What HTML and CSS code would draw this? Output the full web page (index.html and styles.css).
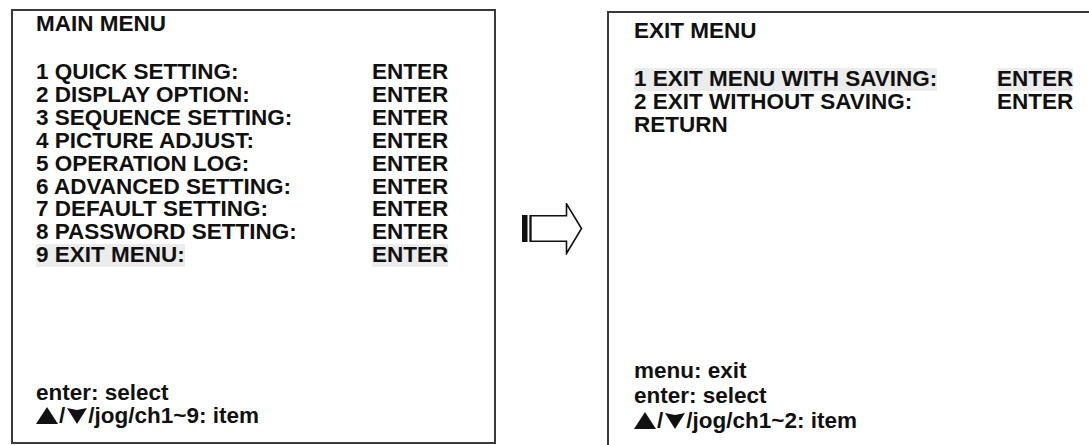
FILE: index.html
```html
<!DOCTYPE html>
<html lang="en">
<head>
  <meta charset="UTF-8" />
  <title>Exit Menu</title>
  <link rel="stylesheet" href="styles.css">
</head>
<body>
  <div class="screens">
    <div class="osd osd-main">
      <div class="osd-title">MAIN MENU</div>
      <div class="osd-list">
        <div class="row"><span>1 QUICK SETTING:</span><span>ENTER</span></div>
        <div class="row"><span>2 DISPLAY OPTION:</span><span>ENTER</span></div>
        <div class="row"><span>3 SEQUENCE SETTING:</span><span>ENTER</span></div>
        <div class="row"><span>4 PICTURE ADJUST:</span><span>ENTER</span></div>
        <div class="row"><span>5 OPERATION LOG:</span><span>ENTER</span></div>
        <div class="row"><span>6 ADVANCED SETTING:</span><span>ENTER</span></div>
        <div class="row"><span>7 DEFAULT SETTING:</span><span>ENTER</span></div>
        <div class="row"><span>8 PASSWORD SETTING:</span><span>ENTER</span></div>
        <div class="row selected"><span>9 EXIT MENU:</span><span>ENTER</span></div>
      </div>
      <div class="osd-help">
        <div>enter: select</div>
        <div><svg class="tri" width="22" height="17" viewBox="0 0 22 17"><polygon points="11,0 22,17 0,17" /></svg>/<svg class="tri tri-down" width="20" height="16" viewBox="0 0 20 16"><polygon points="0,0 10,2 20,0 10,16" /></svg>/jog/ch1~9: item</div>
      </div>
    </div>

    <div class="arrow">
      <svg width="61" height="52" viewBox="0 0 61 52">
        <rect x="0" y="12" width="5.5" height="27" fill="#111" />
        <line x1="8.5" y1="12" x2="8.5" y2="39" stroke="#111" stroke-width="2" />
        <polygon points="8.5,12.8 44.5,12.8 44.5,0.8 59.5,25.5 44.5,50.5 44.5,38.3 8.5,38.3" fill="none" stroke="#111" stroke-width="1.6" />
      </svg>
    </div>

    <div class="osd osd-exit">
      <div class="osd-title">EXIT MENU</div>
      <div class="osd-list">
        <div class="row selected"><span>1 EXIT MENU WITH SAVING:</span><span>ENTER</span></div>
        <div class="row"><span>2 EXIT WITHOUT SAVING:</span><span>ENTER</span></div>
        <div class="row"><span>RETURN</span></div>
      </div>
      <div class="osd-help">
        <div>menu: exit</div>
        <div>enter: select</div>
        <div><svg class="tri" width="22" height="17" viewBox="0 0 22 17"><polygon points="11,0 22,17 0,17" /></svg>/<svg class="tri tri-down" width="20" height="16" viewBox="0 0 20 16"><polygon points="0,0 10,2 20,0 10,16" /></svg>/jog/ch1~2: item</div>
      </div>
    </div>
  </div>
</body>
</html>
```

FILE: styles.css
```css
body {
  margin: 0;
  background: #fff;
  font-family: "Liberation Sans", Arial, sans-serif;
  font-weight: bold;
  font-size: 22.5px;
  color: #111;
  overflow: hidden;
}

.screens {
  display: flex;
  align-items: flex-start;
  padding-left: 11px;
  width: 1089px;
  height: 445px;
  overflow: hidden;
  box-sizing: border-box;
}

.osd {
  flex: none;
  display: flex;
  flex-direction: column;
  box-sizing: border-box;
  border: 2px solid #3a3a3a;
  line-height: 23px;
}

.osd-main {
  width: 485px;
  height: 435px;
  margin-top: 9px;
  padding: 1px 0 15px 23px;
}

.osd-exit {
  width: 520px;
  height: 470px;
  margin-top: 11px;
  margin-left: 24px;
  padding: 6px 0 46px 25px;
}

.osd-title {
  height: 23px;
}

.osd-list {
  margin-top: 26px;
}

.row {
  display: grid;
  justify-items: start;
  line-height: 22.9px;
}

.osd-main .row {
  grid-template-columns: 336px auto;
}

.osd-exit .row {
  grid-template-columns: 363px auto;
}

.row.selected span {
  background: #ececec;
}

.osd-help {
  margin-top: auto;
}

.osd-exit .osd-help {
  line-height: 25px;
}

.tri {
  vertical-align: -1px;
  margin-right: 1px;
}

.tri-down {
  margin-left: 2px;
}

.tri polygon {
  fill: #111;
}

/* arrow between the two screens */
.arrow {
  flex: none;
  margin-top: 203px;
  margin-left: 26px;
}

.arrow svg {
  display: block;
}
```
